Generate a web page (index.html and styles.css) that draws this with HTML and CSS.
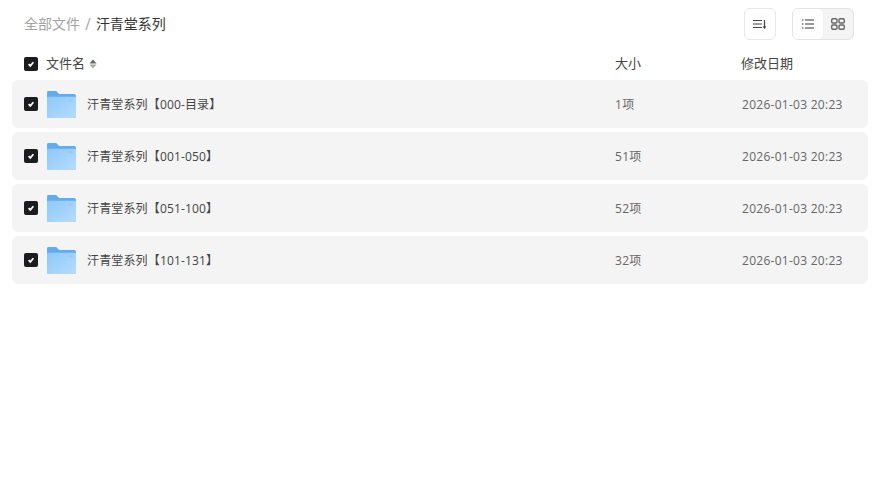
FILE: index.html
```html
<!DOCTYPE html>
<html lang="en">
<head>
  <meta charset="UTF-8" />
  <meta name="viewport" content="width=device-width, initial-scale=1.0" />
  <title>汗青堂系列</title>
  <link rel="stylesheet" href="styles.css">
</head>
<body>
  <!-- Shared icons -->
  <svg class="icon-defs" width="0" height="0">
    <defs>
      <linearGradient id="folder-front" x1="0" y1="0" x2="1" y2="1">
        <stop offset="0" stop-color="#8ec8f9"/>
        <stop offset="1" stop-color="#b6dcfe"/>
      </linearGradient>
      <symbol id="folder-icon" viewBox="0 0 30 28">
        <path d="M0 1.500A1.500 1.500 0 0 1 1.500 0h8l3 3H28a2 2 0 0 1 2 2v21a2 2 0 0 1-2 2H2a2 2 0 0 1-2-2z" fill="#62acee"/>
        <path d="M1 6h28a1 1 0 0 1 1 1v19a2 2 0 0 1-2 2H2a2 2 0 0 1-2-2V7a1 1 0 0 1 1-1z" fill="url(#folder-front)"/>
        <rect x="22" y="8.500" width="5" height="2" rx="1" fill="#8dbff0" opacity=".5"/>
      </symbol>
      <symbol id="check-icon" viewBox="0 0 10 10">
        <path d="M2.600 5.200l1.700 1.700 3.100-3.600" fill="none" stroke="#fff" stroke-width="1.700"/>
      </symbol>
    </defs>
  </svg>

  <!-- Breadcrumb and view buttons -->
  <div class="toolbar">
    <div class="crumbs">
      <span class="crumb-root">全部文件</span>
      <span class="crumb-sep">/</span>
      <span class="crumb-current">汗青堂系列</span>
    </div>
    <div class="tools">
      <div class="tool-btn">
        <svg width="16" height="16" viewBox="0 0 16 16" fill="none" stroke="#444" stroke-width="1.200">
          <path d="M1 4.500h9M1 8h9M1 11.500h9"/>
          <path d="M12.500 4v7.500"/>
          <path d="M11.200 10.500l1.300 2.500 1.300-2.500z" fill="#444" stroke-width="0.500"/>
        </svg>
      </div>
      <div class="view-switch">
        <div class="view-item view-active">
          <svg width="14" height="14" viewBox="0 0 14 14" fill="none" stroke="#333" stroke-width="1.100">
            <path d="M4 3h9M4 7h9M4 11h9"/>
            <path d="M1 3h1.500M1 7h1.500M1 11h1.500"/>
          </svg>
        </div>
        <div class="view-item">
          <svg width="16" height="16" viewBox="0 0 16 16" fill="none" stroke="#666" stroke-width="1.400">
            <rect x="1.700" y="2.700" width="5.300" height="4.300" rx="1.200"/>
            <rect x="9" y="2.700" width="5.300" height="4.300" rx="1.200"/>
            <rect x="1.700" y="9" width="5.300" height="4.300" rx="1.200"/>
            <rect x="9" y="9" width="5.300" height="4.300" rx="1.200"/>
          </svg>
        </div>
      </div>
    </div>
  </div>

  <!-- Column header -->
  <div class="list-head">
    <span class="check"><svg width="10" height="10"><use href="#check-icon"/></svg></span>
    <span class="head-name"><span class="head-label">文件名</span>
      <svg class="sort-icon" width="8" height="10" viewBox="0 0 8 10"><path d="M4 .5L7.500 4.500H.5z" fill="#666"/><path d="M4 9.500L.5 5.500h7z" fill="#aaa"/></svg>
    </span>
    <span class="col-size">大小</span>
    <span class="col-date">修改日期</span>
  </div>

  <!-- File rows -->
  <div class="file-list">
    <div class="file-row">
      <span class="check"><svg width="10" height="10"><use href="#check-icon"/></svg></span>
      <svg class="folder" width="29" height="27"><use href="#folder-icon"/></svg>
      <span class="row-name">汗青堂系列【000-目录】</span>
      <span class="col-size cell">1项</span>
      <span class="col-date cell">2026-01-03 20:23</span>
    </div>
    <div class="file-row">
      <span class="check"><svg width="10" height="10"><use href="#check-icon"/></svg></span>
      <svg class="folder" width="29" height="27"><use href="#folder-icon"/></svg>
      <span class="row-name">汗青堂系列【001-050】</span>
      <span class="col-size cell">51项</span>
      <span class="col-date cell">2026-01-03 20:23</span>
    </div>
    <div class="file-row">
      <span class="check"><svg width="10" height="10"><use href="#check-icon"/></svg></span>
      <svg class="folder" width="29" height="27"><use href="#folder-icon"/></svg>
      <span class="row-name">汗青堂系列【051-100】</span>
      <span class="col-size cell">52项</span>
      <span class="col-date cell">2026-01-03 20:23</span>
    </div>
    <div class="file-row">
      <span class="check"><svg width="10" height="10"><use href="#check-icon"/></svg></span>
      <svg class="folder" width="29" height="27"><use href="#folder-icon"/></svg>
      <span class="row-name">汗青堂系列【101-131】</span>
      <span class="col-size cell">32项</span>
      <span class="col-date cell">2026-01-03 20:23</span>
    </div>
  </div>
</body>
</html>
```

FILE: styles.css
```css
body {
  font-family: "Open Sans", "Noto Sans CJK SC", sans-serif;
  margin: 0;
  padding: 0 10px 0 12px;
  background-color: #fff;
  color: #333;
}
.icon-defs {
  display: block;
}
.toolbar {
  display: flex;
  justify-content: space-between;
  align-items: center;
  height: 48px;
  padding: 0 14px 0 12px;
}
.crumbs {
  display: flex;
  align-items: center;
  font-size: 14px;
  line-height: 20px;
}
.crumb-root {
  color: #a3a3a3;
}
.crumb-sep {
  margin: 0 5px;
  font-size: 16px;
  color: #aaa;
}
.crumb-current {
  color: #333;
}
.tools {
  display: flex;
  gap: 16px;
}
.tool-btn {
  display: flex;
  align-items: center;
  justify-content: center;
  width: 32px;
  height: 32px;
  box-sizing: border-box;
  border: 1px solid #e8e8e8;
  border-radius: 6px;
}
.view-switch {
  display: flex;
  width: 62px;
  height: 32px;
  box-sizing: border-box;
  border: 1px solid #e3e3e3;
  border-radius: 6px;
  background-color: #f4f4f4;
}
.view-item {
  display: flex;
  align-items: center;
  justify-content: center;
  flex: 1;
}
.view-active {
  background-color: #fff;
  border-radius: 5px;
}
.list-head {
  display: flex;
  align-items: center;
  height: 32px;
  padding-left: 12px;
  font-size: 13px;
  line-height: 18px;
  color: #444;
}
.list-head > span:not(.check) {
  position: relative;
  top: -1px;
}
.check {
  display: flex;
  align-items: center;
  justify-content: center;
  flex: none;
  width: 14px;
  height: 14px;
  border-radius: 2px;
  background-color: #1c1c1e;
}
.head-name {
  display: flex;
  align-items: center;
  gap: 4px;
  flex: 1;
  margin-left: 8px;
}
.sort-icon {
  margin-top: 1px;
}
.col-size,
.col-date {
  flex: none;
  width: 126px;
}
.col-date {
  width: 127px;
}
.file-list {
  display: flex;
  flex-direction: column;
  gap: 4px;
}
.file-row {
  display: flex;
  align-items: center;
  height: 48px;
  padding-left: 12px;
  border-radius: 6px;
  background-color: #f4f4f4;
  font-size: 12px;
  color: #444;
}
.folder {
  flex: none;
  margin: 1px 0 0 9px;
}
.row-name {
  flex: 1;
  margin-left: 11px;
  letter-spacing: 0.15px;
}
.cell {
  color: #666;
  letter-spacing: 0.27px;
}
.col-date.cell {
  padding-left: 1px;
  box-sizing: border-box;
}
```
